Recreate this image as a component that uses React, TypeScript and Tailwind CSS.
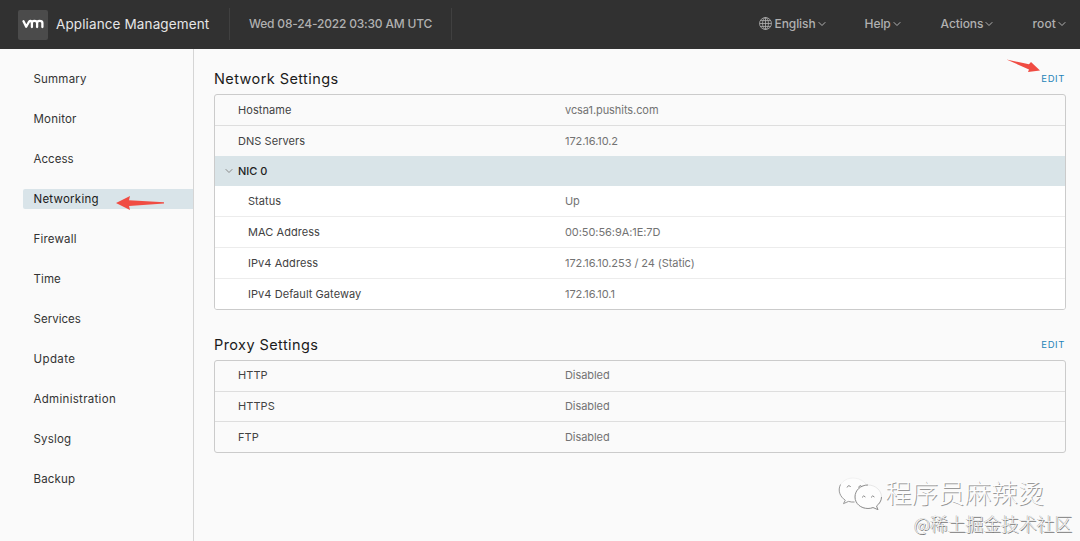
import { useState } from "react";
import { clsx } from "clsx";

type Row = { label: string; value: string };

const navItems = [
    { name: "Summary", tracking: "tracking-[0.2px]" },
    { name: "Monitor", tracking: "tracking-[0.2px]" },
    { name: "Access", tracking: "tracking-[0.05px]" },
    { name: "Networking", tracking: "tracking-[0.24px]" },
    { name: "Firewall", tracking: "tracking-[0.2px]" },
    { name: "Time", tracking: "tracking-[0.1px]" },
    { name: "Services", tracking: "tracking-[0.03px]" },
    { name: "Update", tracking: "tracking-[0.4px]" },
    { name: "Administration", tracking: "tracking-[0.3px]" },
    { name: "Syslog", tracking: "tracking-[0.2px]" },
    { name: "Backup", tracking: "tracking-[0.15px]" },
];

const networkRows: Row[] = [
    { label: "Hostname", value: "vcsa1.pushits.com" },
    { label: "DNS Servers", value: "172.16.10.2" },
];

const nicRows: Row[] = [
    { label: "Status", value: "Up" },
    { label: "MAC Address", value: "00:50:56:9A:1E:7D" },
    { label: "IPv4 Address", value: "172.16.10.253 / 24 (Static)" },
    { label: "IPv4 Default Gateway", value: "172.16.10.1" },
];

const proxyRows: Row[] = [
    { label: "HTTP", value: "Disabled" },
    { label: "HTTPS", value: "Disabled" },
    { label: "FTP", value: "Disabled" },
];

function Caret({ className }: { className?: string }) {
    return (
        <svg viewBox="0 0 8 6" className={clsx("shrink-0", className)} fill="none" stroke="currentColor" strokeWidth="1">
            <path d="M.7 1.2 4 4.5 7.3 1.2" />
        </svg>
    );
}

function Globe() {
    return (
        <svg viewBox="0 0 12 12" className="-ml-px mr-[3px] h-[13px] w-[13px] shrink-0" fill="none" stroke="currentColor" strokeWidth="0.75">
            <circle cx="6" cy="6" r="5.5" />
            <ellipse cx="6" cy="6" rx="2.7" ry="5.5" />
            <path d="M6 .5v11M.5 6h11M1.3 3.3h9.4M1.3 8.7h9.4" />
        </svg>
    );
}

function VmLogo() {
    return (
        <div className="flex h-[30px] w-[30px] items-center justify-center rounded-[2px] bg-[#4b4b4b]">
            <svg viewBox="0 0 22 10" className="-mt-px h-[10px] w-[22px]" fill="none" stroke="#fff" strokeWidth="2.3" strokeLinecap="round" strokeLinejoin="round">
                <path d="M1.5 2.2 4.2 7.8 7 2.8Q7.5 1.9 8.7 1.9 9.9 2 9.9 3.2V8" />
                <path d="M9.9 3.5Q10.2 1.9 12.3 1.9 15.1 1.9 15.1 4V8M15.1 4Q15.2 1.9 17.5 1.9 20.4 1.9 20.4 4V8" />
            </svg>
        </div>
    );
}

function SettingsRow({ row, nested = false }: { row: Row; nested?: boolean }) {
    return (
        <div className={clsx("flex flex-1 items-center border-b text-[11px] last:border-b-0", nested ? "border-[#ececec] bg-white pt-px pl-[33px]" : "border-[#dedede] pb-[0.5px] pl-[23px]")}>
            <span className={clsx("shrink-0 tracking-[0.06px] text-[#424242]", nested ? "w-[317px]" : "w-[327px]")}>{row.label}</span>
            <span className="-tracking-[0.07px] text-[#737373]">{row.value}</span>
        </div>
    );
}

function SectionHead({ title }: { title: string }) {
    return (
        <div className="flex h-5 items-center justify-between">
            <h2 className="text-[14.5px] tracking-[0.42px] text-[#1b1b1b]">{title}</h2>
            <button className="pt-px pr-px text-[9.5px] tracking-[0.6px] text-[#2484b8]">EDIT</button>
        </div>
    );
}

export default function App() {
    const [active, setActive] = useState("Networking");
    const [open, setOpen] = useState(true);

    return (
        <div className="relative flex h-[541px] w-[1080px] flex-col overflow-hidden bg-[#fafafa] font-['Inter',sans-serif]">
            <header className="flex h-[49px] shrink-0 items-center bg-[#313131] pl-[18px] text-[12px] font-medium text-[#b0b0b0]">
                <VmLogo />
                <h1 className="-mt-px ml-2 w-[173px] whitespace-nowrap text-[13.5px] font-normal tracking-[0.12px] text-[#e6e6e6]">Appliance Management</h1>
                <div className="-mt-px flex h-8 w-[223px] items-center border-x border-[#404040] pl-[19px] -tracking-[0.19px] whitespace-nowrap">Wed 08-24-2022 03:30 AM UTC</div>
                <nav className="-mt-0.5 ml-auto flex items-center pr-[14px] -tracking-[0.1px]">
                    <button className="flex w-[105px] items-center"><Globe />English<Caret className="ml-[2px] h-[6px] w-2" /></button>
                    <button className="flex w-[76px] items-center">Help<Caret className="ml-[2px] h-[6px] w-2" /></button>
                    <button className="flex w-[92px] items-center">Actions<Caret className="ml-[2px] h-[6px] w-2" /></button>
                    <button className="flex items-center tracking-[0.1px]">root<Caret className="ml-[2px] h-[6px] w-2" /></button>
                </nav>
            </header>

            <div className="flex min-h-0 flex-1">
                <aside className="flex w-[194px] shrink-0 flex-col gap-5 border-r border-[#d5d5d5] pt-5 pl-[23px]">
                    {navItems.map((item) => (
                        <button
                            key={item.name}
                            onClick={() => setActive(item.name)}
                            className={clsx("h-5 shrink-0 rounded-l-[2px] pt-0.5 pl-[10.5px] text-left text-[11.5px]", item.tracking, active === item.name ? "bg-[#d9e4e9] text-[#1b1b1b]" : "text-[#333]")}
                        >
                            {item.name}
                        </button>
                    ))}
                </aside>

                <main className="flex-1 pt-5 pr-[14px] pl-5">
                    <SectionHead title="Network Settings" />
                    <div className="mt-[5px] flex h-[216px] flex-col overflow-hidden rounded-[3px] border border-[#cbcbcb]">
                        <div className="flex h-[61px] shrink-0 flex-col">
                            {networkRows.map((row) => <SettingsRow key={row.label} row={row} />)}
                        </div>
                        <button onClick={() => setOpen(!open)} className="flex h-[30px] shrink-0 items-center bg-[#d9e4e8] pl-[10px] text-[11px] font-medium text-[#222]">
                            <Caret className={clsx("mr-[5px] h-[6px] w-2 text-[#888]", !open && "-rotate-90")} />
                            NIC 0
                        </button>
                        {open && nicRows.map((row) => <SettingsRow key={row.label} row={row} nested />)}
                    </div>

                    <div className="mt-[25px]">
                        <SectionHead title="Proxy Settings" />
                    </div>
                    <div className="mt-[5px] flex h-[93px] flex-col overflow-hidden rounded-[3px] border border-[#cbcbcb]">
                        {proxyRows.map((row) => <SettingsRow key={row.label} row={row} />)}
                    </div>
                </main>
            </div>

            {/* Pointer arrows */}
            <svg className="pointer-events-none absolute inset-0 h-full w-full" viewBox="0 0 1080 541" fill="#f04c43">
                <path d="M116 203 130 196 129 200.2 164 202.2V203.5L129 206 130 210Z" />
                <path d="M1006.5 59.5 1029 64.3 1031 62 1040 70.5 1028 72 1029 69.5Z" />
            </svg>

            {/* Watermarks */}
            <div className="pointer-events-none absolute top-[475px] left-[838px] flex items-center font-['Noto_Sans_CJK_SC',sans-serif]">
                <svg viewBox="0 0 46 36" className="h-9 w-[46px] shrink-0" fill="#fdfdfd">
                    <path d="M15 3C7 3 1 8.5 1 15.5c0 4.3 2.2 7.5 6 9.7L5.2 29l5.3-2.500c2 .6 4 .8 6 .6 8 0 14-5 14-11.600S23 3 15 3Z" stroke="#ededed" strokeWidth="0.7" />
                    <path d="M2.5 9.5c-3 6-.5 12.200 4.800 15.700L5.500 28.600l5-2.200c2.200.6 4.200.8 6 .6" fill="none" stroke="#929292" strokeWidth="0.9" />
                    <path d="M30 10C22.500 10 17 15.300 17 22s6 11.500 13 11.500c2 0 3.500-.3 5-1l5 2.200-1.500-3.700c3-2.200 5-5.500 5-9 0-6.500-6-12-13.500-12Z" stroke="#dedede" strokeWidth="0.7" />
                    <path d="M30 10C22.500 10 17 15.300 17 22s6 11.500 13 11.500c2 0 3.500-.3 5-1l5 2.200-1.500-3.700c3-2.200 5-5.500 5-9" fill="none" stroke="#929292" strokeWidth="1" />
                    <path d="M9 12.500q1.800-3.500 3.600-.5M20.500 12.500q1.800-3.500 3.600-.5M24 22.500q1.700-3 3.400-.5M33 22.500q1.700-3 3.400-.5" fill="none" stroke="#888" />
                </svg>
                <span className="-mt-0.5 ml-px text-[26.5px] leading-9 font-light whitespace-nowrap text-[#fdfdfd] [text-shadow:1px_1px_0.5px_#999]">程序员麻辣烫</span>
            </div>
            <div className="pointer-events-none absolute top-[511px] left-[914px] font-['Noto_Sans_CJK_SC',sans-serif] text-[17.8px] leading-6 font-light whitespace-nowrap text-[#f4f4f4] [text-shadow:0.7px_0.7px_0.5px_#777,-0.5px_-0.5px_0_#aaa]">@稀土掘金技术社区</div>
        </div>
    );
}
